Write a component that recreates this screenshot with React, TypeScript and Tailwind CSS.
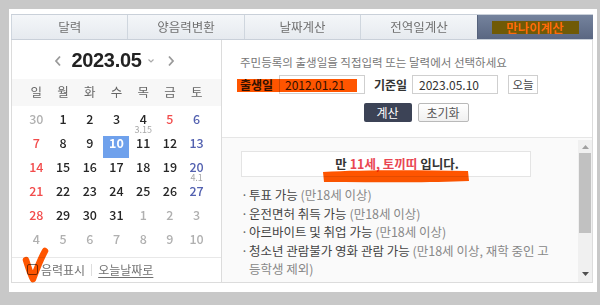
import React from "react";

type Day = { n: number; c: "o" | "r" | "b" | "d"; note?: string; sel?: boolean };

const rows: Day[][] = [
  [
    { n: 30, c: "o" },
    { n: 1, c: "d" },
    { n: 2, c: "d" },
    { n: 3, c: "d" },
    { n: 4, c: "d", note: "3.15" },
    { n: 5, c: "r" },
    { n: 6, c: "b" },
  ],
  [
    { n: 7, c: "r" },
    { n: 8, c: "d" },
    { n: 9, c: "d" },
    { n: 10, c: "d", sel: true },
    { n: 11, c: "d" },
    { n: 12, c: "d" },
    { n: 13, c: "b" },
  ],
  [
    { n: 14, c: "r" },
    { n: 15, c: "d" },
    { n: 16, c: "d" },
    { n: 17, c: "d" },
    { n: 18, c: "d" },
    { n: 19, c: "d" },
    { n: 20, c: "b", note: "4.1" },
  ],
  [
    { n: 21, c: "r" },
    { n: 22, c: "d" },
    { n: 23, c: "d" },
    { n: 24, c: "d" },
    { n: 25, c: "d" },
    { n: 26, c: "d" },
    { n: 27, c: "b" },
  ],
  [
    { n: 28, c: "r" },
    { n: 29, c: "d" },
    { n: 30, c: "d" },
    { n: 31, c: "d" },
    { n: 1, c: "o" },
    { n: 2, c: "o" },
    { n: 3, c: "o" },
  ],
  [
    { n: 4, c: "o" },
    { n: 5, c: "o" },
    { n: 6, c: "o" },
    { n: 7, c: "o" },
    { n: 8, c: "o" },
    { n: 9, c: "o" },
    { n: 10, c: "o" },
  ],
];

const colorOf = (c: Day["c"]) =>
  c === "o" ? "text-[#b0b0b0]" : c === "r" ? "text-[#f24c4c]" : c === "b" ? "text-[#5361b0]" : "text-[#262626]";

const tabs = ["달력", "양음력변환", "날짜계산", "전역일계산"];

export default function App() {
  return (
    <div className="w-[600px] h-[305px] bg-[#c8c8c8] pt-[9px] pl-[9px] font-['Noto_Sans_CJK_KR',sans-serif] overflow-hidden">
      <div className="w-[588px] h-[283px] bg-white pt-[5px] pl-[2px]">
        <div className="w-[582px] h-[269px] flex flex-col">
          {/* tabs */}
          <div className="h-[26px] flex border-t border-b border-[#c9d0d9]">
            {tabs.map((t) => (
              <div
                key={t}
                className="flex-1 flex items-center justify-center border-l border-[#cfd6de] bg-linear-to-b from-[#f4f6f9] to-[#e6eaef] text-[12.5px] text-[#707070]"
              >
                {t}
              </div>
            ))}
            <div className="flex-1 flex items-center justify-center bg-linear-to-b from-[#75839d] to-[#5a6782] border-l border-[#55627c]">
              <div className="w-[87px] h-[13px] bg-[#705a06] flex items-center justify-center">
                <span className="text-[12.5px] leading-[13px] font-bold text-[#ff6a0a]">만나이계산</span>
              </div>
            </div>
          </div>

          <div className="flex h-[243px]">
            {/* left calendar panel */}
            <div className="relative w-[211px] border-l border-r border-b border-[#dcdcdc] bg-white flex flex-col">
              <div className="h-[39px] flex items-center justify-center pr-[4px]">
                <svg width="8" height="12" viewBox="0 0 8 12" className="mr-[9px] mt-[2px]">
                  <path d="M6 1.5 L2 6 L6 10.5" stroke="#9a9a9a" strokeWidth="1.8" fill="none" />
                </svg>
                <span className="font-['Liberation_Sans',sans-serif] font-bold text-[20px] text-[#222] tracking-[-0.3px]">
                  2023.05
                </span>
                <svg width="6" height="4" viewBox="0 0 6 4" className="ml-[6px] mt-[2px]">
                  <path d="M0.5 0.5 L3 3 L5.5 0.5" stroke="#aaa" strokeWidth="1.2" fill="none" />
                </svg>
                <svg width="8" height="12" viewBox="0 0 8 12" className="ml-[13px] mt-[2px]">
                  <path d="M2 1.5 L6 6 L2 10.5" stroke="#9a9a9a" strokeWidth="1.8" fill="none" />
                </svg>
              </div>
              <div className="h-[27px] bg-[#f7f7f7] flex justify-center">
                <div className="w-[187px] grid grid-cols-7">
                  {["일", "월", "화", "수", "목", "금", "토"].map((d) => (
                    <div key={d} className="flex items-center justify-center text-[12.5px] text-[#666]">
                      {d}
                    </div>
                  ))}
                </div>
              </div>
              <div className="h-[6px]" />
              <div className="flex justify-center">
                <div className="w-[187px] grid grid-cols-7">
                  {rows.flat().map((d, i) => (
                    <div key={i} className="h-[24px] flex justify-center">
                      <div
                        className={
                          "w-[26px] h-[22px] flex flex-col items-center " + (d.sel ? "bg-[#6fa1ec]" : "")
                        }
                      >
                        <span
                          className={
                            "text-[12.5px] leading-[14px] " +
                            (d.sel ? "text-white font-bold" : colorOf(d.c) + " font-medium")
                          }
                        >
                          {d.n}
                        </span>
                        {d.note && (
                          <span className="text-[9px] leading-[9px] text-[#a8a8a8] mt-[-1px]">{d.note}</span>
                        )}
                      </div>
                    </div>
                  ))}
                </div>
              </div>
              <div className="mt-[1px] border-t border-[#e8e8e8] flex-1 flex items-center pl-[15px] pb-[1px]">
                <span className="w-[11px] h-[11px] border border-[#777] rounded-[2px] bg-white" />
                <span className="ml-[3px] text-[12px] text-[#707070]">음력표시</span>
                <span className="ml-[6px] w-px h-[12px] bg-[#dddddd]" />
                <span className="ml-[6px] text-[12px] text-[#707070] underline underline-offset-2">오늘날짜로</span>
              </div>
              <svg
                className="absolute left-[9px] top-[204px] mix-blend-multiply pointer-events-none"
                width="28"
                height="40"
                viewBox="0 0 28 40"
              >
                <path
                  d="M5 16 C7 22 9 29 12 35 C15 27 19 16 24 7"
                  stroke="#ff5500"
                  strokeWidth="6.5"
                  strokeLinecap="round"
                  strokeLinejoin="round"
                  fill="none"
                />
              </svg>
            </div>

            {/* right panel */}
            <div className="relative w-[371px] border-r border-b border-[#dcdcdc] flex flex-col">
              <div className="h-[98px] border-b border-[#e6e6e6] bg-white pt-[15px] pl-[18px]">
                <div className="text-[11.5px] leading-[14px] text-[#777]">
                  주민등록의 출생일을 직접입력 또는 달력에서 선택하세요
                </div>
                <div className="mt-[6px] flex items-center h-[19px]">
                  <span className="w-[39px] text-[12px] font-bold text-[#333] whitespace-nowrap">출생일</span>
                  <div className="w-[86px] h-[19px] border border-[#cfcfcf] bg-white pl-[5px] flex items-center text-[12px] text-[#333]">
                    2012.01.21
                  </div>
                  <span className="ml-[9px] w-[38px] text-[12px] font-bold text-[#333] whitespace-nowrap">기준일</span>
                  <div className="w-[86px] h-[19px] border border-[#cfcfcf] bg-white pl-[6px] flex items-center text-[12px] text-[#333]">
                    2023.05.10
                  </div>
                  <div className="ml-[10px] w-[30px] h-[19px] border border-[#cfcfcf] bg-white flex items-center justify-center text-[11.5px] text-[#444]">
                    오늘
                  </div>
                </div>
                <div className="mt-[9px] flex justify-center gap-[6px]">
                  <div className="w-[48px] h-[19px] rounded-[2px] bg-[#3c4356] flex items-center justify-center text-[12px] text-white">
                    계산
                  </div>
                  <div className="w-[51px] h-[19px] rounded-[2px] border border-[#b9b9b9] bg-linear-to-b from-white to-[#f0f0f0] flex items-center justify-center text-[12px] text-[#555]">
                    초기화
                  </div>
                </div>
              </div>

              <div className="flex-1 flex bg-[#fafafa] overflow-hidden">
                <div className="flex-1 pl-[19px] pt-[13px] overflow-hidden">
                  <div className="w-[290px] h-[26px] border border-[#e4e4e4] bg-white flex items-center justify-center pl-[22px] text-[12.5px] font-bold text-[#333]">
                    만&nbsp;<span className="text-[#e94652]">11세, 토끼띠</span>&nbsp;입니다.
                  </div>
                  <ul className="mt-[9px] text-[12.5px] leading-[18.5px] text-[#444]">
                    <li className="flex">
                      <span className="w-[8px] text-[#666]">·</span>
                      <span>
                        투표 가능 <span className="text-[#888]">(만18세 이상)</span>
                      </span>
                    </li>
                    <li className="flex">
                      <span className="w-[8px] text-[#666]">·</span>
                      <span>
                        운전면허 취득 가능 <span className="text-[#888]">(만18세 이상)</span>
                      </span>
                    </li>
                    <li className="flex">
                      <span className="w-[8px] text-[#666]">·</span>
                      <span>
                        아르바이트 및 취업 가능 <span className="text-[#888]">(만18세 이상)</span>
                      </span>
                    </li>
                    <li className="flex">
                      <span className="w-[8px] text-[#666]">·</span>
                      <span className="whitespace-nowrap">
                        청소년 관람불가 영화 관람 가능 <span className="text-[#888]">(만18세 이상, 재학 중인 고</span>
                        <br />
                        <span className="text-[#888]">등학생 제외)</span>
                      </span>
                    </li>
                    <li className="flex">
                      <span className="w-[8px] text-[#666]">·</span>
                      <span>
                        주류 구매 가능 <span className="text-[#888]">(만19세 이상)</span>
                      </span>
                    </li>
                  </ul>
                </div>
                <div className="w-[14px] mt-[2px] bg-[#f0f0f0] flex flex-col items-center">
                  <div className="h-[13px] flex items-center justify-center">
                    <svg width="7" height="4" viewBox="0 0 7 4">
                      <path d="M0 4 L3.5 0 L7 4 Z" fill="#a0a0a0" />
                    </svg>
                  </div>
                  <div className="w-[12px] h-[80px] bg-[#c1c1c1]" />
                  <div className="flex-1" />
                  <div className="h-[16px] flex items-center justify-center">
                    <svg width="7" height="4" viewBox="0 0 7 4">
                      <path d="M0 0 L7 0 L3.5 4 Z" fill="#505050" />
                    </svg>
                  </div>
                </div>
              </div>

              {/* annotations */}
              <div className="absolute left-[15px] top-[39px] w-[120px] h-[13px] bg-[#ff5500] mix-blend-multiply pointer-events-none" />
              <svg
                className="absolute left-[99px] top-[129px] mix-blend-multiply pointer-events-none"
                width="150"
                height="15"
                viewBox="0 0 150 15"
              >
                <path d="M2 3 C40 1 90 1 147 2 L148 12 C110 14 60 13 3 13 Z" fill="#ff5500" />
              </svg>
            </div>
          </div>
        </div>
      </div>
    </div>
  );
}
